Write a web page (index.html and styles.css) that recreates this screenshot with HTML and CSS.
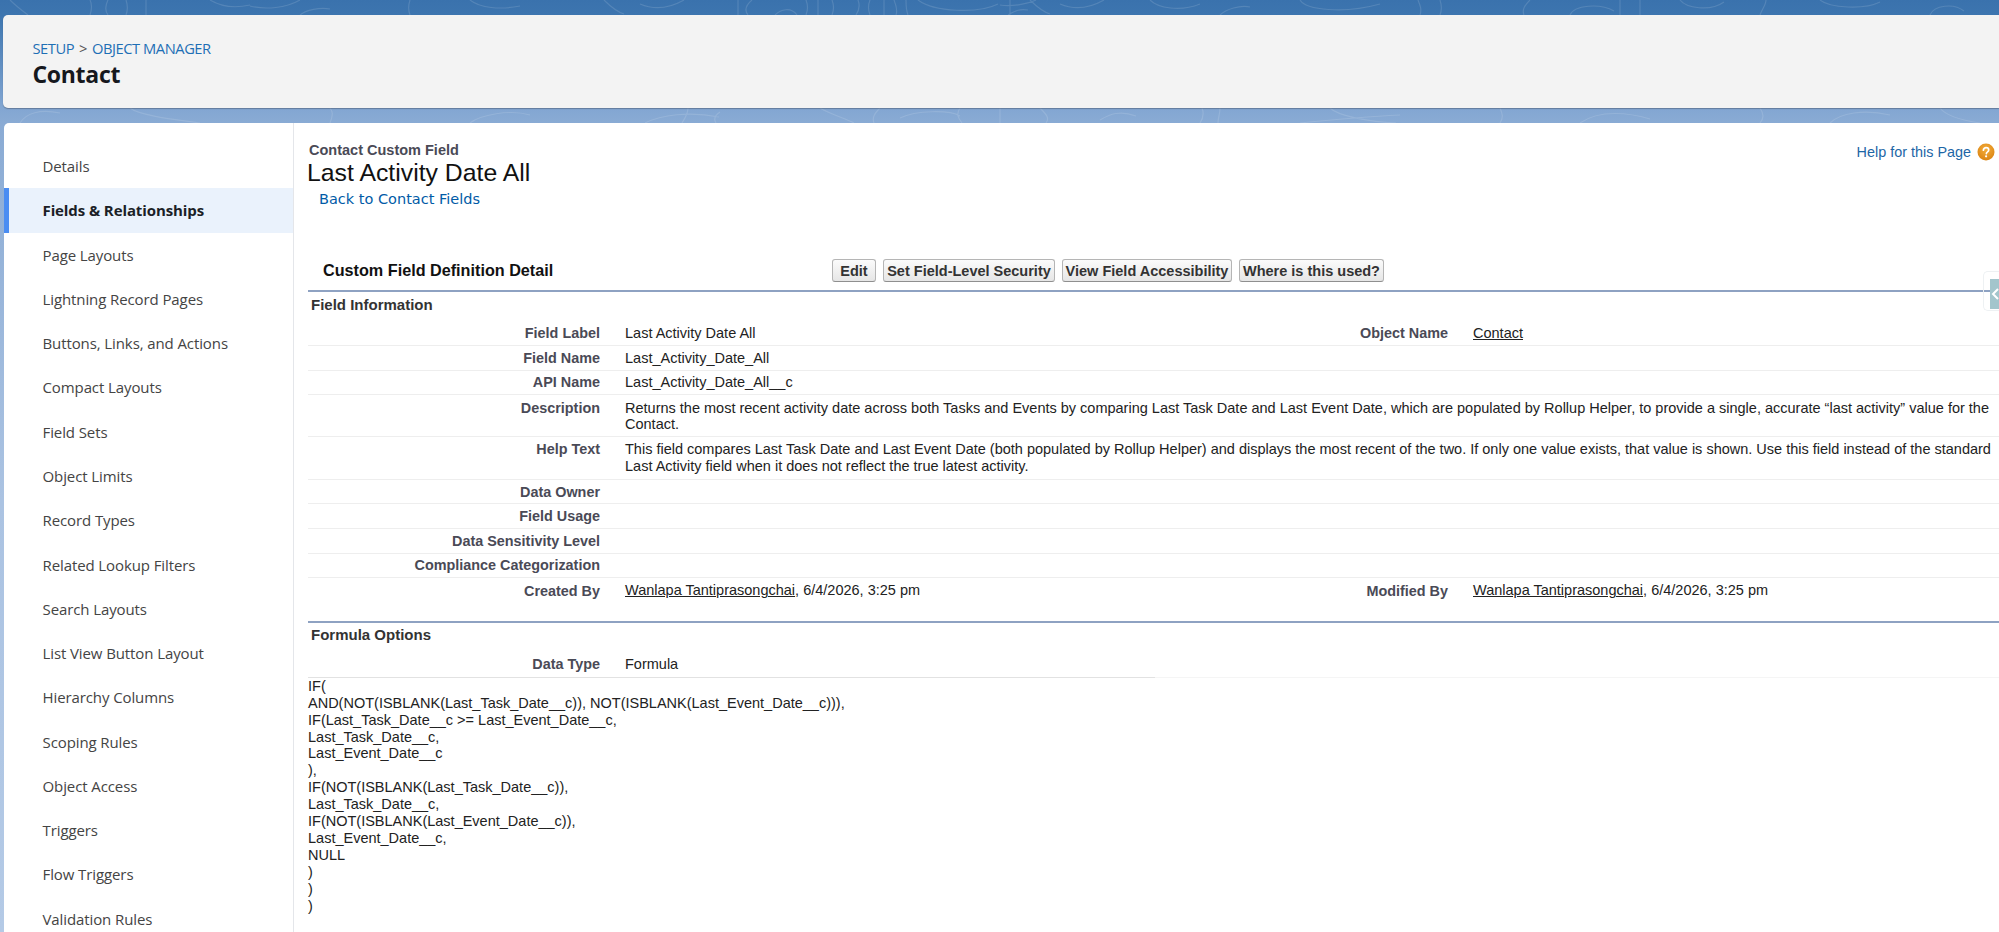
FILE: index.html
```html
<!DOCTYPE html>
<html lang="en">
<head>
<meta charset="utf-8">
<title>Contact Custom Field</title>
<link rel="stylesheet" href="styles.css">
</head>
<body>
<svg class="bg-art" viewBox="0 0 1999 125" preserveAspectRatio="none" aria-hidden="true">
  <g fill="none" stroke="#fff" stroke-opacity=".13" stroke-width="1.2">
    <path d="M10 0c6 6 14 12 18 15M90 15c2-6 2-11 0-15M108 0c-3 6-3 11 0 15M126 0c2 6 2 10 0 15M146 0v15M210 0c10 6 22 9 40 5M250 6c16 4 36 2 50-6M300 15c6-5 20-8 30-6M410 0c-2 6-2 10 0 15M470 0c10 8 30 10 50 6M604 0c6 6 14 12 20 14M640 4c14 6 30 4 44-4M738 15v-15M752 0c-6 5-8 10-4 15M775 15c6-6 16-8 22 0M806 15c2-5 2-10 0-15M818 0v15M832 15c2-5 2-10 0-15M856 15c4-6 4-10 2-15M870 0c-2 5-2 10 0 15M884 0v15M896 15c2-5 0-10-2-15M906 0c0 5 0 10 2 15M918 0c16 12 60 14 80 4M1000 5c14 2 30-2 36-5M1008 15c8-5 12-6 20-5M1010 0v15M1030 0c6 6 14 12 20 14M1060 4c14 6 30 4 44-4M1150 0c8 8 30 12 50 4M1220 15c6-6 20-10 30-8M1300 0c6 10 44 14 80 4M1420 15c2-6 0-10-2-15M1440 0c2 6 2 10 0 15M1530 0c-6 6-8 10-6 15M1570 15c4-10 30-12 44-4M1620 0v15M1640 0v15M1680 0c6 8 30 12 44 2M1760 15c2-6 6-10 6-15M1820 0c10 8 44 10 60 2M1930 15c4-10 24-12 34-4"/>
    <path d="M20 123c6-10 20-14 40-10M130 108c10 8 50 12 70 15M330 123c4-10 2-12 0-15M470 123c10-8 40-14 60-8M645 123c16-8 44-12 74-6M688 108c0 6-3 10-6 15M720 112c-6 4-6 8-4 11M820 108c10 6 24 10 34 15M880 108c-6 6-8 10-6 15M900 118c16-8 50-8 60-2M960 108c-4 6-2 10 2 15M1000 108v15M1040 108c6 6 10 10 6 15M1100 120c10-6 20-10 36-4M1200 123c4-6 4-10 2-15M1220 108c0 6-2 10-2 15M1300 123c20-2 60-6 100-8M1330 108c8 8 40 14 66 15M1500 123c4-6 2-10 0-15M1580 123c20-14 50-10 70-4M1760 108c4 6 4 10 0 15M1830 123c10-10 34-14 60-8M1940 108c6 8 20 12 40 15"/>
  </g>
</svg>

<div class="page">
  <header class="header">
    <nav class="crumbs"><a class="crumb">SETUP</a><span class="crumb-sep">&gt;</span><a class="crumb">OBJECT MANAGER</a></nav>
    <h1 class="object-title">Contact</h1>
  </header>

  <div class="main">
    <aside class="sidebar">
      <a class="side-item">Details</a>
      <a class="side-item active">Fields &amp; Relationships</a>
      <a class="side-item">Page Layouts</a>
      <a class="side-item">Lightning Record Pages</a>
      <a class="side-item">Buttons, Links, and Actions</a>
      <a class="side-item">Compact Layouts</a>
      <a class="side-item">Field Sets</a>
      <a class="side-item">Object Limits</a>
      <a class="side-item">Record Types</a>
      <a class="side-item">Related Lookup Filters</a>
      <a class="side-item">Search Layouts</a>
      <a class="side-item">List View Button Layout</a>
      <a class="side-item">Hierarchy Columns</a>
      <a class="side-item">Scoping Rules</a>
      <a class="side-item">Object Access</a>
      <a class="side-item">Triggers</a>
      <a class="side-item">Flow Triggers</a>
      <a class="side-item">Validation Rules</a>
    </aside>

    <section class="content">
      <div class="title-row">
        <div class="title-block">
          <div class="eyebrow">Contact Custom Field</div>
          <h2 class="page-title">Last Activity Date All</h2>
          <a class="back-link">Back to Contact Fields</a>
        </div>
        <a class="help">
          <span>Help for this Page</span>
          <svg class="help-icon" viewBox="0 0 18 18" aria-hidden="true">
            <defs><radialGradient id="hg" cx="50%" cy="35%" r="70%"><stop offset="0" stop-color="#f4ae3c"/><stop offset="1" stop-color="#d9810f"/></radialGradient></defs>
            <circle cx="9" cy="9" r="8.5" fill="url(#hg)"/>
            <path d="M6.4 7.2c0-1.6 1.2-2.5 2.7-2.5s2.6.9 2.6 2.2c0 1.1-.6 1.6-1.4 2.2-.6.4-.9.8-.9 1.5" fill="none" stroke="#fff" stroke-width="1.7" stroke-linecap="round"/>
            <circle cx="9.1" cy="13.3" r="1.1" fill="#fff"/>
          </svg>
        </a>
      </div>

      <div class="detail-head">
        <h3 class="detail-title">Custom Field Definition Detail</h3>
        <div class="buttons">
          <button class="btn btn-edit">Edit</button>
          <button class="btn btn-fls">Set Field-Level Security</button>
          <button class="btn btn-view">View Field Accessibility</button>
          <button class="btn btn-where">Where is this used?</button>
        </div>
      </div>

      <div class="section-line">
        <h4 class="section-title">Field Information</h4>
        <a class="side-tab" aria-hidden="true">
          <svg viewBox="0 0 10 30"><path d="M8 10l-5 5 5 5" fill="none" stroke="#fff" stroke-width="2"/></svg>
        </a>
      </div>

      <div class="row r-first">
        <div class="lab">Field Label</div><div class="val">Last Activity Date All</div>
        <div class="lab">Object Name</div><div class="val"><a class="ul">Contact</a></div>
      </div>
      <div class="row"><div class="lab">Field Name</div><div class="val wide">Last_Activity_Date_All</div></div>
      <div class="row"><div class="lab">API Name</div><div class="val wide">Last_Activity_Date_All__c</div></div>
      <div class="row r-two"><div class="lab">Description</div><div class="val wide">Returns the most recent activity date across both Tasks and Events by comparing Last Task Date and Last Event Date, which are populated by Rollup Helper, to provide a single, accurate “last activity” value for the<br>Contact.</div></div>
      <div class="row r-two r-help"><div class="lab">Help Text</div><div class="val wide">This field compares Last Task Date and Last Event Date (both populated by Rollup Helper) and displays the most recent of the two. If only one value exists, that value is shown. Use this field instead of the standard<br>Last Activity field when it does not reflect the true latest activity.</div></div>
      <div class="row"><div class="lab">Data Owner</div><div class="val wide"></div></div>
      <div class="row"><div class="lab">Field Usage</div><div class="val wide"></div></div>
      <div class="row"><div class="lab">Data Sensitivity Level</div><div class="val wide"></div></div>
      <div class="row"><div class="lab">Compliance Categorization</div><div class="val wide"></div></div>
      <div class="row r-last">
        <div class="lab">Created By</div><div class="val"><a class="ul">Wanlapa Tantiprasongchai</a>, 6/4/2026, 3:25 pm</div>
        <div class="lab">Modified By</div><div class="val"><a class="ul">Wanlapa Tantiprasongchai</a>, 6/4/2026, 3:25 pm</div>
      </div>

      <div class="section-line s-formula">
        <h4 class="section-title">Formula Options</h4>
      </div>
      <div class="row r-type"><div class="lab">Data Type</div><div class="val wide">Formula</div></div>
      <div class="type-rule"></div>

      <pre class="formula">IF(
AND(NOT(ISBLANK(Last_Task_Date__c)), NOT(ISBLANK(Last_Event_Date__c))),
IF(Last_Task_Date__c &gt;= Last_Event_Date__c,
Last_Task_Date__c,
Last_Event_Date__c
),
IF(NOT(ISBLANK(Last_Task_Date__c)),
Last_Task_Date__c,
IF(NOT(ISBLANK(Last_Event_Date__c)),
Last_Event_Date__c,
NULL
)
)
)</pre>
    </section>
  </div>
</div>
</body>
</html>
```

FILE: styles.css
```css
* { box-sizing: border-box; }
html, body { margin: 0; height: 932px; overflow: hidden; }
body {
  position: relative;
  background: linear-gradient(180deg, #3a72ad 0, #3d75af 15px, #82a6d2 108px, #8aabd4 123px, #abc3e2 500px, #b4cae6 932px);
  font-family: "Liberation Sans", Arial, sans-serif;
  color: #222;
}
.bg-art { position: absolute; left: 0; top: 0; width: 1999px; height: 125px; }
.page { position: relative; padding-top: 15px; height: 932px; display: flex; flex-direction: column; }

.header {
  height: 93px;
  margin-left: 3px;
  background: #f3f3f3;
  border-radius: 5px 0 0 5px;
  box-shadow: 0 1px 1px rgba(60, 70, 90, .45);
  padding: 23px 0 0 29.5px;
  font-family: "Open Sans", "Noto Sans", sans-serif;
}
.crumbs { display: flex; align-items: center; gap: 5px; font-size: 14.7px; line-height: 20px; letter-spacing: -.45px; }
.crumb { color: #1e6fb5; }
.crumb-sep { color: #555; }
.object-title { margin: 2px 0 0; font-size: 23px; line-height: 28px; font-weight: 700; color: #16181d; letter-spacing: -.3px; }

.main { flex: 1; display: flex; margin: 15px 0 0 4px; background: #fff; border-radius: 5px 0 0 0; min-height: 0; overflow: hidden; }

.sidebar { width: 290px; flex: none; border-right: 1px solid #e4e6ea; padding-top: 21px; font-family: "Open Sans", "Noto Sans", sans-serif; }
.side-item { display: flex; align-items: center; height: 44.27px; padding-left: 38.5px; font-size: 15px; color: #444; letter-spacing: -.1px; white-space: nowrap; }
.side-item.active { background: #eaf2fc; border-left: 5px solid #4a8df2; padding-left: 33.5px; font-weight: 700; color: #1b1f27; }

.content { flex: 1; min-width: 0; padding: 19px 0 0 14px; position: relative; }

.title-row { display: flex; justify-content: space-between; align-items: flex-start; height: 112px; }
.eyebrow { font-size: 14.5px; line-height: 16px; font-weight: 700; color: #4a4a56; padding-left: 1px; }
.page-title { margin: 0 0 0 -1px; font-size: 24.8px; line-height: 30px; font-weight: 400; color: #111; }
.back-link { display: block; margin: 2px 0 0 11px; font-family: "DejaVu Sans", Verdana, sans-serif; font-size: 14.5px; line-height: 18px; color: #015ba7; }
.help { display: flex; align-items: center; gap: 6px; margin: 1px 4px 0 0; font-size: 14.4px; line-height: 18px; color: #1d66a6; }
.help-icon { width: 18px; height: 18px; }

.detail-head { display: flex; align-items: center; height: 33px; margin-bottom: 3px; }
.detail-title { margin: 0 0 0 15px; width: 509px; flex: none; font-size: 16.2px; font-weight: 700; color: #111; }
.buttons { display: flex; gap: 7px; }
.btn {
  height: 23px; padding: 0; border: 1px solid #b5b5b5; border-bottom-color: #8f8f8f; border-radius: 3px;
  background: linear-gradient(180deg, #fbfbfb, #e6e6e6);
  font-family: "Liberation Sans", Arial, sans-serif; font-size: 14.5px; font-weight: 700; color: #333; text-align: center;
}
.btn-edit { width: 44px; }
.btn-fls { width: 172px; }
.btn-view { width: 170px; }
.btn-where { width: 145px; }

.section-line { position: relative; border-top: 2px solid #8ea2c2; height: 31px; padding-bottom: 5px; display: flex; align-items: center; }
.section-title { margin: 0 0 0 3px; font-size: 15px; font-weight: 700; color: #333; }
.side-tab {
  position: absolute; right: 0; top: -21px; width: 16px; height: 40px; padding: 7px 0 3px 6px;
  border: 1px solid #eef1f3; border-right: 0; border-radius: 5px 0 0 5px; display: block;
}
.side-tab svg { display: block; width: 10px; height: 30px; background: #a3c5cc; }

.row {
  display: grid;
  grid-template-columns: 292px 823px 0 1fr;
  height: 24.6px;
  align-items: center;
  font-size: 14.4px;
  border-bottom: 1px solid #eeeeee;
}
.r-first { grid-template-columns: 292px 752px 96px 1fr; height: 25px; }
.r-last { grid-template-columns: 292px 752px 96px 1fr; height: 24.7px; border-bottom: 0; }
.r-two { height: 41.5px; align-items: start; padding-top: 4.5px; }
.r-two .val { line-height: 16.6px; }
.r-help { height: 43.1px; }
.r-type { height: 27px; border-bottom-color: #f5f5f5; }
.lab { font-weight: 700; color: #4a4a56; text-align: right; white-space: nowrap; }
.val { padding-left: 25px; color: #222; line-height: 16.4px; white-space: nowrap; font-size: 14.5px; }
.val.wide { grid-column: 2 / -1; }
.ul { color: #222; text-decoration: underline; }
.s-formula { margin-top: 18px; height: 30px; }
.type-rule { width: 847px; height: 1px; margin-top: -1px; background: #e2e2e2; }

.formula { margin: 0; font-family: "Liberation Sans", Arial, sans-serif; font-size: 14.5px; line-height: 16.9px; color: #222; }
```
